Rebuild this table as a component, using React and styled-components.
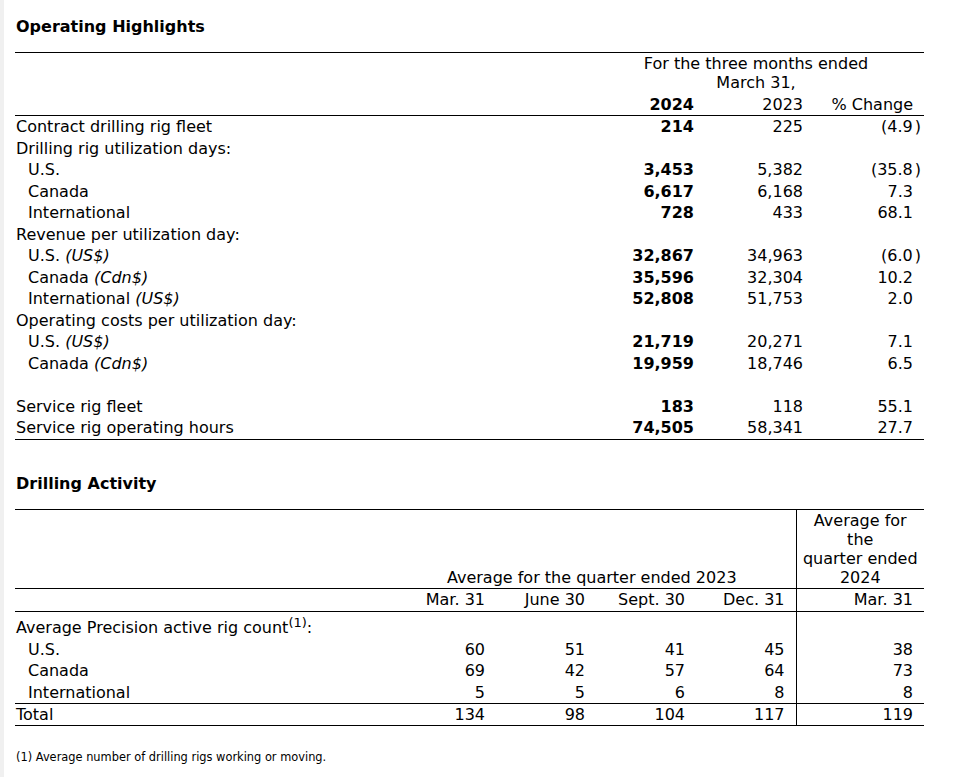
import React from 'react';
import styled, { createGlobalStyle } from 'styled-components';

const GlobalStyle = createGlobalStyle`
  body {
    margin: 0;
    background: #fff;
  }
`;

const Page = styled.div`
  min-height: 777px;
  box-sizing: border-box;
  border-left: 4px solid #f0f0f0;
  padding: 17px 0 30px 11px;
  font-family: "DejaVu Sans", Verdana, sans-serif;
  color: #000;
`;

const Title = styled.h2`
  margin: ${(p) => p.$top || 0}px 0 15px 1px;
  font-size: 16px;
  line-height: 20px;
  font-weight: 700;
`;

const Table = styled.table`
  width: 909px;
  border-collapse: collapse;
  table-layout: fixed;
  border-top: 1px solid #000;
  border-bottom: 1px solid #000;
  font-size: 16px;
`;

const Cell = styled.td`
  padding: 1.25px ${(p) => (p.$padRight ?? 11)}px 1.25px ${(p) => (p.$sub ? 13 : p.$padLeft ?? 1)}px;
  line-height: 19px;
  white-space: nowrap;
  vertical-align: bottom;
  text-align: ${(p) => p.$align || 'left'};
  font-weight: ${(p) => (p.$bold ? 700 : 400)};
  border-bottom: ${(p) => (p.$rule ? '1px solid #000' : 'none')};
  border-left: ${(p) => (p.$divider ? '1px solid #000' : 'none')};
`;

const Unit = styled.i`
  font-style: italic;
`;

const Paren = styled.span`
  display: inline-block;
  margin-left: 2px;
  margin-right: -8px;
`;

const Note = styled.sup`
  font-size: 13px;
`;

const Footnote = styled.p`
  margin: 24px 0 0 1px;
  font-size: 11.4px;
  line-height: 14px;
`;

const highlights = [
  { label: 'Contract drilling rig fleet', values: ['214', '225', '(4.9)'] },
  { label: 'Drilling rig utilization days:' },
  { label: 'U.S.', sub: true, values: ['3,453', '5,382', '(35.8)'] },
  { label: 'Canada', sub: true, values: ['6,617', '6,168', '7.3'] },
  { label: 'International', sub: true, values: ['728', '433', '68.1'] },
  { label: 'Revenue per utilization day:' },
  { label: 'U.S.', unit: '(US$)', sub: true, values: ['32,867', '34,963', '(6.0)'] },
  { label: 'Canada', unit: '(Cdn$)', sub: true, values: ['35,596', '32,304', '10.2'] },
  { label: 'International', unit: '(US$)', sub: true, values: ['52,808', '51,753', '2.0'] },
  { label: 'Operating costs per utilization day:' },
  { label: 'U.S.', unit: '(US$)', sub: true, values: ['21,719', '20,271', '7.1'] },
  { label: 'Canada', unit: '(Cdn$)', sub: true, values: ['19,959', '18,746', '6.5'] },
  { label: '' },
  { label: 'Service rig fleet', values: ['183', '118', '55.1'] },
  { label: 'Service rig operating hours', values: ['74,505', '58,341', '27.7'] },
];

const activity = [
  { label: 'U.S.', values: ['60', '51', '41', '45', '38'] },
  { label: 'Canada', values: ['69', '42', '57', '64', '73'] },
  { label: 'International', values: ['5', '5', '6', '8', '8'] },
];

const Change = ({ value }) => {
  if (value.startsWith('(')) {
    return (
      <>
        {value.slice(0, -1)}
        <Paren>)</Paren>
      </>
    );
  }
  return value;
};

const OperatingHighlights = () => (
  <Table>
    <colgroup>
      <col style={{ width: 580 }} />
      <col style={{ width: 110 }} />
      <col style={{ width: 109 }} />
      <col style={{ width: 110 }} />
    </colgroup>
    <thead>
      <tr>
        <Cell />
        <Cell colSpan={3} $align="center" $padRight={7} $padLeft={0}>
          For the three months ended
          <br />
          March 31,
        </Cell>
      </tr>
      <tr>
        <Cell $rule />
        <Cell $rule $align="right" $bold>2024</Cell>
        <Cell $rule $align="right">2023</Cell>
        <Cell $rule $align="right">% Change</Cell>
      </tr>
    </thead>
    <tbody>
      {highlights.map((row, i) => (
        <tr key={i}>
          <Cell $sub={row.sub}>
            {row.label || '\u00a0'}
            {row.unit && (
              <>
                {' '}
                <Unit>{row.unit}</Unit>
              </>
            )}
          </Cell>
          <Cell $align="right" $bold>{row.values?.[0]}</Cell>
          <Cell $align="right">{row.values?.[1]}</Cell>
          <Cell $align="right">{row.values && <Change value={row.values[2]} />}</Cell>
        </tr>
      ))}
    </tbody>
  </Table>
);

const DrillingActivity = () => (
  <Table>
    <colgroup>
      <col style={{ width: 381 }} />
      <col style={{ width: 100 }} />
      <col style={{ width: 100 }} />
      <col style={{ width: 100 }} />
      <col style={{ width: 100 }} />
      <col style={{ width: 128 }} />
    </colgroup>
    <thead>
      <tr>
        <Cell $rule />
        <Cell colSpan={4} $rule $align="center" $padRight={8} $padLeft={0}>
          Average for the quarter ended 2023
        </Cell>
        <Cell $rule $divider $align="center" $padRight={0} $padLeft={0}>
          Average for
          <br />
          the
          <br />
          quarter ended
          <br />
          2024
        </Cell>
      </tr>
      <tr>
        <Cell $rule />
        <Cell $rule $align="right">Mar. 31</Cell>
        <Cell $rule $align="right">June 30</Cell>
        <Cell $rule $align="right">Sept. 30</Cell>
        <Cell $rule $align="right">Dec. 31</Cell>
        <Cell $rule $divider $align="right">Mar. 31</Cell>
      </tr>
    </thead>
    <tbody>
      <tr>
        <Cell>
          Average Precision active rig count<Note>(1)</Note>:
        </Cell>
        <Cell />
        <Cell />
        <Cell />
        <Cell />
        <Cell $divider />
      </tr>
      {activity.map((row, i) => (
        <tr key={row.label}>
          <Cell $sub $rule={i === activity.length - 1}>{row.label}</Cell>
          {row.values.map((v, j) => (
            <Cell
              key={j}
              $align="right"
              $rule={i === activity.length - 1}
              $divider={j === 4}
            >
              {v}
            </Cell>
          ))}
        </tr>
      ))}
      <tr>
        <Cell>Total</Cell>
        {['134', '98', '104', '117', '119'].map((v, j) => (
          <Cell key={j} $align="right" $divider={j === 4}>
            {v}
          </Cell>
        ))}
      </tr>
    </tbody>
  </Table>
);

const App = () => (
  <Page>
    <GlobalStyle />
    <Title>Operating Highlights</Title>
    <OperatingHighlights />
    <Title $top={34}>Drilling Activity</Title>
    <DrillingActivity />
    <Footnote>(1) Average number of drilling rigs working or moving.</Footnote>
  </Page>
);

export default App;
